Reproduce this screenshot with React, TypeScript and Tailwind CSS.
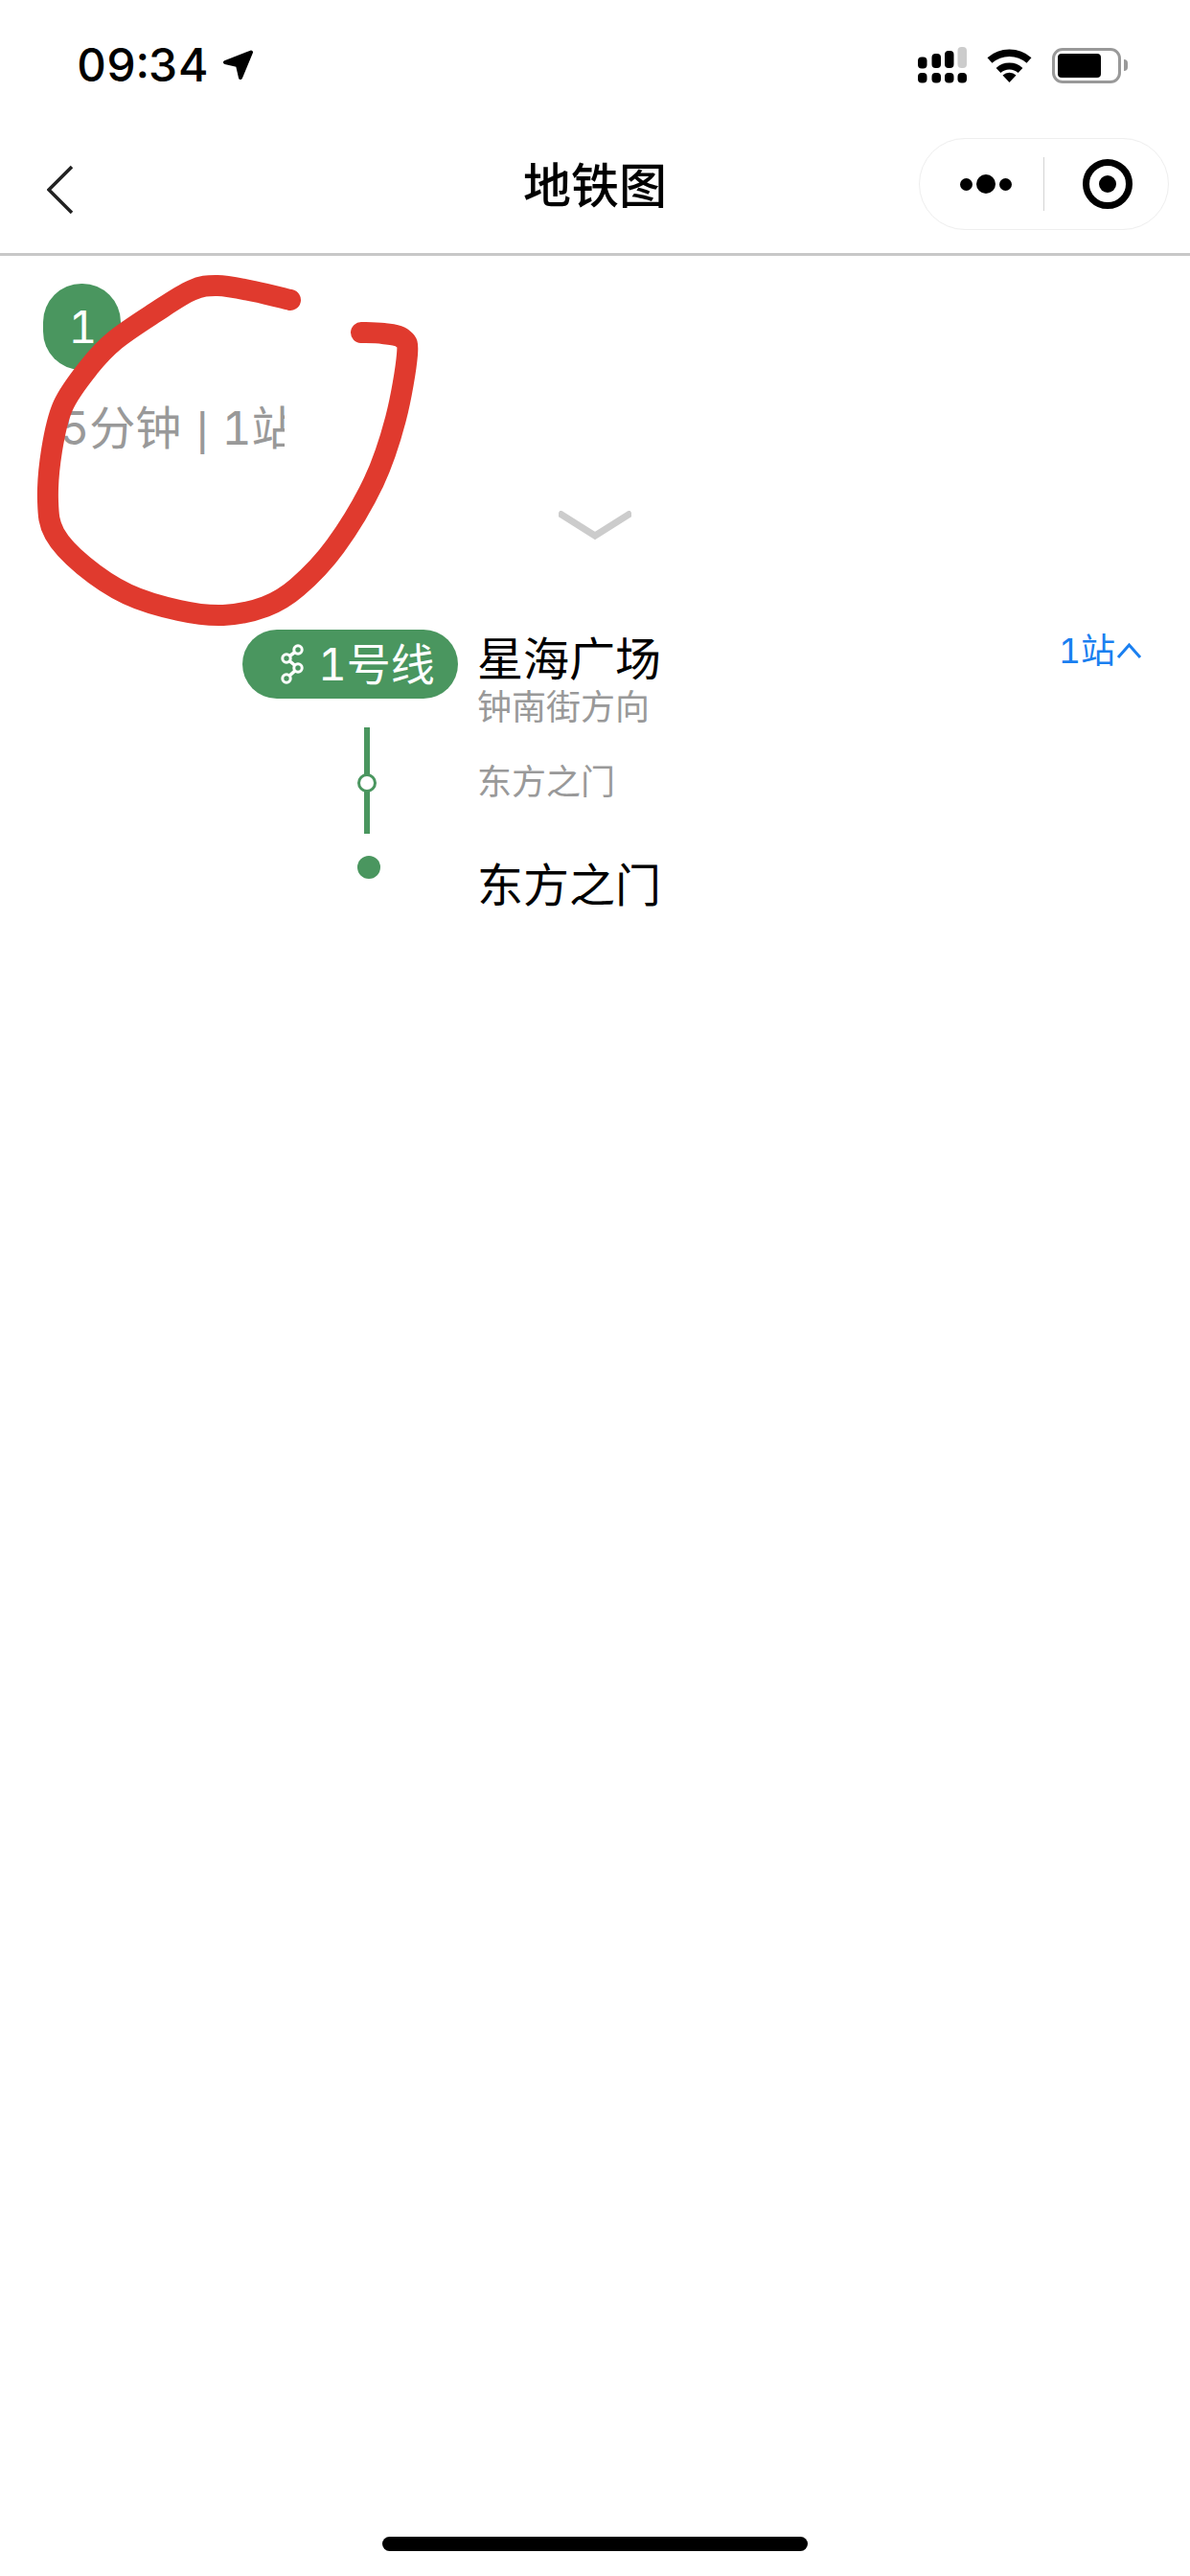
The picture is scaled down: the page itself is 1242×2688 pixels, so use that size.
const annotation: number[][] = [
  [303, 313], [265, 304], [227, 298], [200, 303], [162, 326], [120, 355], [93, 383], [66, 423], [54, 470], [50, 523],
  [57, 557], [87, 590], [133, 620], [187, 637], [233, 642], [277, 633], [310, 613], [350, 570], [390, 503], [413, 437],
  [425, 370], [420, 353], [400, 348], [377, 347],
];

function smoothPath(pts: number[][]) {
  let d = `M${pts[0][0]} ${pts[0][1]}`;
  for (let i = 0; i < pts.length - 1; i++) {
    const p0 = pts[Math.max(i - 1, 0)];
    const p1 = pts[i];
    const p2 = pts[i + 1];
    const p3 = pts[Math.min(i + 2, pts.length - 1)];
    const c1x = p1[0] + (p2[0] - p0[0]) / 6;
    const c1y = p1[1] + (p2[1] - p0[1]) / 6;
    const c2x = p2[0] - (p3[0] - p1[0]) / 6;
    const c2y = p2[1] - (p3[1] - p1[1]) / 6;
    d += ` C${c1x} ${c1y} ${c2x} ${c2y} ${p2[0]} ${p2[1]}`;
  }
  return d;
}

export default function App() {
  const font = { fontFamily: 'Inter, "Noto Sans CJK SC", sans-serif' };
  return (
    <div style={font} className="relative w-[1242px] h-[2688px] bg-white overflow-hidden flex flex-col">
      {/* status bar */}
      <div className="h-[144px] shrink-0 flex items-start justify-between pt-[48px] pl-[80px] pr-[65px]">
        <div className="flex items-center gap-[14px] h-[40px]">
          <span className="text-[48px] leading-[40px] font-medium text-black tabular-nums">09:34</span>
          <svg width="36" height="36" viewBox="228 50 36 36">
            <path d="M259 54.5 L232 65 L245 68 L248 81 Z" fill="#000" stroke="#000" strokeWidth="4" strokeLinejoin="round" />
          </svg>
        </div>
        <div className="flex items-center h-[40px]">
          <svg width="52" height="38" viewBox="958 48 52 38">
            {[958, 972.5, 986, 999.5].map((x) => (
              <rect key={x} x={x} y="75" width="9.5" height="10.5" rx="4" fill="#000" />
            ))}
            <rect x="958" y="58.5" width="9.5" height="12" rx="4" fill="#000" />
            <rect x="972.5" y="55" width="9.5" height="15" rx="4" fill="#000" />
            <rect x="986" y="52" width="9.5" height="18" rx="4" fill="#000" />
            <rect x="999.5" y="48" width="9.5" height="22" rx="4" fill="#ccc" />
          </svg>
          <svg className="ml-[20px]" width="47" height="36" viewBox="0 0 47 36">
            <path d="M3 13 A31 31 0 0 1 44 13" fill="none" stroke="#000" strokeWidth="7.5" />
            <path d="M12 23.5 A17 17 0 0 1 35 23.5" fill="none" stroke="#000" strokeWidth="7" />
            <path d="M23.5 36 L16.5 28.5 A10.5 10.5 0 0 1 30.5 28.5 Z" fill="#000" />
          </svg>
          <div className="ml-[21px] w-[72px] h-[37px] rounded-[11px] border-[3px] border-[#999] p-[3px] pr-[18px]">
            <div className="h-full rounded-[4px] bg-black" />
          </div>
          <div className="ml-[3px] w-[4px] h-[12px] rounded-r-full bg-[#999]" />
        </div>
      </div>

      {/* nav */}
      <div className="h-[123px] shrink-0 border-b-[3px] border-[#c8c8c8] pl-[49px] pr-[22px] relative">
        <div className="h-[96px] flex items-center justify-between">
          <svg className="mt-[11px]" width="28" height="52" viewBox="0 0 28 52">
            <path d="M26 2 L2 26 L26 50" fill="none" stroke="#222" strokeWidth="3.5" />
          </svg>
          <div className="w-[261px] h-[96px] rounded-full border border-[#eeeeee] flex items-center">
            <div className="w-[129px] flex items-center justify-center gap-[4px] pl-[8px]">
              <span className="w-[13px] h-[13px] rounded-full bg-black" />
              <span className="w-[20px] h-[20px] rounded-full bg-black" />
              <span className="w-[13px] h-[13px] rounded-full bg-black" />
            </div>
            <div className="w-px h-[56px] bg-[#d4d4d4]" />
            <div className="flex-1 flex items-center justify-center pl-[2px]">
              <div className="w-[52px] h-[52px] rounded-full border-[7px] border-black flex items-center justify-center">
                <span className="w-[18px] h-[18px] rounded-full bg-black" />
              </div>
            </div>
          </div>
        </div>
        <div className="absolute left-0 right-0 top-[2px] h-[96px] flex items-center justify-center">
          <span className="text-[50px] leading-[60px] font-medium text-black">地铁图</span>
        </div>
      </div>

      {/* summary */}
      <div className="pl-[45px] pt-[29px] shrink-0">
        <div className="w-[81px] h-[90px] rounded-[40px] bg-[#4a965f] flex items-center justify-center pl-[2px]">
          <span className="text-[46px] leading-[54px] text-white tabular-nums">1</span>
        </div>
        <div className="mt-[31px] ml-[17px] w-[235px] h-[60px] overflow-hidden">
          <span className="text-[48px] leading-[60px] text-[#999] whitespace-nowrap tabular-nums">
            5分钟 <span className="font-['Liberation_Sans'] ml-[3px] mr-[1px]">|</span> 1站
          </span>
        </div>
      </div>

      {/* collapse chevron */}
      <div className="mt-[56px] flex justify-center shrink-0">
        <svg width="76" height="32" viewBox="0 0 76 32">
          <path d="M0 2 L38 26 L76 2" fill="none" stroke="#cccccc" strokeWidth="7" />
        </svg>
      </div>

      {/* route */}
      <div className="mt-[92px] pl-[253px] pr-[50px] flex shrink-0">
        <div className="w-[245px] flex flex-col">
          <div className="w-[225px] h-[72px] rounded-full bg-[#4a965f] flex items-center pl-[40px] gap-[13px]">
            <svg width="26" height="42" viewBox="0 0 26 42">
              <path d="M18 6 L6 15 L18 25 L6 36" fill="none" stroke="#fff" strokeWidth="3.5" />
              {[[18, 6], [6, 15], [18, 25], [6, 36]].map(([cx, cy]) => (
                <circle key={cy} cx={cx} cy={cy} r="4.2" fill="#4a965f" stroke="#fff" strokeWidth="3" />
              ))}
            </svg>
            <span className="text-[46px] leading-[60px] text-white whitespace-nowrap tabular-nums">1号线</span>
          </div>
          <div className="relative mt-[30px] ml-[127px] w-[6px] h-[111px] bg-[#4a965f]">
            <span className="absolute left-[-7px] top-[48px] w-[20px] h-[20px] rounded-full border-[3px] border-[#4a965f] bg-white" />
          </div>
          <div className="mt-[23px] ml-[120px] w-[24px] h-[24px] rounded-full bg-[#4a965f]" />
        </div>
        <div className="flex-1 flex flex-col mt-[4px]">
          <div className="flex justify-between items-start">
            <span className="text-[48px] leading-[54px] text-black">星海广场</span>
            <div className="flex items-center h-[44px] text-[#1a7ff0] -mt-[4px]">
              <span className="text-[36px] leading-[44px] tabular-nums">1站</span>
              <svg className="ml-[1px]" width="27" height="18" viewBox="0 0 27 18">
                <path d="M2 16 L13.5 3 L25 16" fill="none" stroke="#1a7ff0" strokeWidth="3" />
              </svg>
            </div>
          </div>
          <span className="mt-[3px] text-[36px] leading-[40px] text-[#999]">钟南街方向</span>
          <span className="mt-[38px] text-[36px] leading-[40px] text-[#999]">东方之门</span>
          <span className="mt-[61px] text-[48px] leading-[54px] text-black">东方之门</span>
        </div>
      </div>

      {/* hand-drawn annotation */}
      <svg className="absolute left-0 top-0" width="500" height="700" viewBox="0 0 500 700">
        <path d={smoothPath(annotation)} fill="none" stroke="#e03a2e" strokeWidth="22" strokeLinecap="round" strokeLinejoin="round" />
      </svg>

      {/* home indicator */}
      <div className="absolute left-[399px] top-[2647px] w-[444px] h-[15px] rounded-full bg-black" />
    </div>
  );
}
